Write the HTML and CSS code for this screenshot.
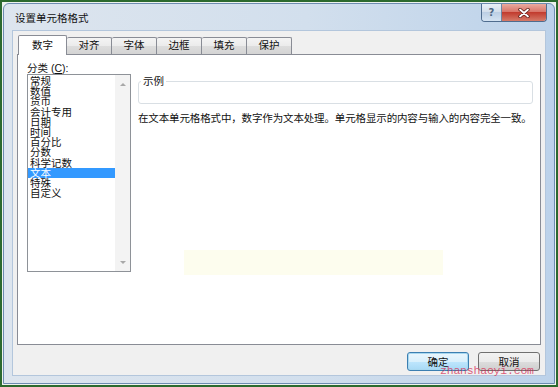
FILE: index.html
```html
<!DOCTYPE html>
<html lang="zh-CN">
<head>
    <meta charset="UTF-8">
    <title>设置单元格格式</title>
    <link rel="stylesheet" href="styles.css">
</head>
<body>
    <div class="shot">
        <div class="window">
            <div class="titlebar">
                <span class="title">设置单元格格式</span>
                <div class="caption-btns">
                    <button class="cap-help">?</button>
                    <button class="cap-close">
                        <svg class="close-icon" viewBox="0 0 12 10">
                            <path d="M2 1.5 L10 8.5 M10 1.5 L2 8.5" stroke="#5a1a14" stroke-width="3.4" stroke-linecap="round"></path>
                            <path d="M2 1.5 L10 8.5 M10 1.5 L2 8.5" stroke="#ffffff" stroke-width="1.8" stroke-linecap="round"></path>
                        </svg>
                    </button>
                </div>
            </div>

            <div class="client">
                <div class="tabs">
                    <div class="tab active">数字</div>
                    <div class="tab">对齐</div>
                    <div class="tab">字体</div>
                    <div class="tab">边框</div>
                    <div class="tab">填充</div>
                    <div class="tab">保护</div>
                </div>

                <div class="panel">
                    <div class="cat-col">
                        <div class="cat-label">分类 (<u>C</u>):</div>
                        <div class="listbox">
                            <ul class="items">
                                <li>常规</li>
                                <li>数值</li>
                                <li>货币</li>
                                <li>会计专用</li>
                                <li>日期</li>
                                <li>时间</li>
                                <li>百分比</li>
                                <li>分数</li>
                                <li>科学记数</li>
                                <li class="selected">文本</li>
                                <li>特殊</li>
                                <li>自定义</li>
                            </ul>
                            <div class="vscroll">
                                <span class="arrow up"></span>
                                <span class="arrow down"></span>
                            </div>
                        </div>
                    </div>

                    <div class="detail">
                        <fieldset class="sample">
                            <legend>示例</legend>
                        </fieldset>
                        <p class="desc">在文本单元格格式中，数字作为文本处理。单元格显示的内容与输入的内容完全一致。</p>
                    </div>

                    <div class="ghost"></div>
                </div>

                <div class="actions">
                    <button class="btn default">确定</button>
                    <button class="btn">取消</button>
                </div>
            </div>
        </div>
        <div class="watermark">zhanshaoyi.com</div>
    </div>
</body>
</html>
```

FILE: styles.css
```css
:root {
    --text: #111111;
    --tab-border: #898c95;
    --client-bg: #f0f0f0;
    --highlight: #3399ff;
}

* {
    margin: 0;
    padding: 0;
    box-sizing: border-box;
}

body {
    font-family: "Liberation Sans", "Noto Sans CJK SC", sans-serif;
    font-size: 10.5px;
    color: var(--text);
    background: #ffffff;
}

.shot {
    position: relative;
    width: 558px;
    height: 387px;
    border: 2px solid #2c6a2e;
    padding: 1px;
    background: #eef3ee;
}

.window {
    height: 100%;
    display: flex;
    flex-direction: column;
    border: 1px solid #6d8cb1;
    border-radius: 6px 6px 0 0;
    background: linear-gradient(90deg, #dde5ee 0%, #d2dfed 55%, #bcd2ea 100%);
    padding: 0 8px 7px 8px;
}

.titlebar {
    height: 26px;
    display: flex;
    justify-content: space-between;
}

.title {
    padding: 8px 0 0 3px;
    line-height: 12px;
}

.caption-btns {
    display: flex;
    height: 18px;
    margin-right: -1px;
    border: 1px solid #4f6c8e;
    border-top: none;
    border-radius: 0 0 4px 4px;
    overflow: hidden;
}

.caption-btns button {
    border: none;
    display: flex;
    align-items: center;
    justify-content: center;
    font-family: "DejaVu Sans", sans-serif;
}

.cap-help {
    width: 20px;
    background: linear-gradient(#e8eff7 0%, #d3dfec 45%, #bccfe4 50%, #d4e3f2 100%);
    border-right: 1px solid #6f86a3 !important;
    color: #4e6784;
    font-size: 10px;
    font-weight: bold;
}

.cap-close {
    width: 44px;
    background: linear-gradient(#e9aa9f 0%, #d9766a 45%, #c23c2f 50%, #d57a68 100%);
}

.close-icon {
    width: 12px;
    height: 10px;
}

.client {
    flex: 1;
    display: flex;
    flex-direction: column;
    background: var(--client-bg);
    border: 1px solid #b3c6dc;
    padding: 4px 4px 4px 4px;
}

.tabs {
    height: 19px;
    display: flex;
    align-items: flex-end;
    padding-left: 1px;
    position: relative;
    z-index: 1;
}

.tab {
    width: 45px;
    height: 17px;
    line-height: 15px;
    text-align: center;
    border: 1px solid var(--tab-border);
    border-bottom: none;
    border-left: none;
    background: linear-gradient(#f4f4f4 0%, #ebebeb 50%, #dddddd 51%, #d4d4d4 100%);
    border-radius: 2px 2px 0 0;
}

.tab.active {
    width: 49px;
    height: 20px;
    margin-bottom: -1px;
    line-height: 19px;
    border-left: 1px solid var(--tab-border);
    background: #ffffff;
}

.panel {
    flex: 1;
    position: relative;
    display: flex;
    gap: 7px;
    background: #ffffff;
    border: 1px solid var(--tab-border);
    padding: 7px 7px 0 9px;
}

.cat-col {
    flex: none;
    width: 104px;
}

.cat-label {
    line-height: 12px;
}

.listbox {
    height: 198px;
    display: flex;
    border: 1px solid #8e9298;
    background: #ffffff;
}

.items {
    flex: 1;
    list-style: none;
    padding-top: 1px;
}

.items li {
    line-height: 10.2px;
    height: 10.2px;
    padding-left: 2px;
    white-space: nowrap;
}

.items li.selected {
    background: var(--highlight);
    color: #ffffff;
}

.vscroll {
    width: 15px;
    background: #f3f3f3;
    display: flex;
    flex-direction: column;
    justify-content: space-between;
    align-items: center;
    padding: 8px 0 7px;
}

.arrow {
    width: 0;
    height: 0;
    border-left: 3px solid transparent;
    border-right: 3px solid transparent;
}

.arrow.up {
    border-bottom: 3px solid #a8a8a8;
}

.arrow.down {
    border-top: 3px solid #a8a8a8;
}

.detail {
    flex: 1;
    min-width: 0;
    padding-top: 13px;
}

.sample {
    height: 29px;
    border: 1px solid #d9dfe4;
    border-radius: 3px;
    padding: 0 2px;
}

.sample legend {
    padding: 0 2px;
    line-height: 12px;
}

.desc {
    margin-top: 8px;
    line-height: 12px;
    white-space: nowrap;
    letter-spacing: -0.14px;
}

.ghost {
    position: absolute;
    left: 166px;
    top: 195px;
    width: 259px;
    height: 25px;
    background: rgba(250, 250, 205, 0.35);
}

.actions {
    height: 19px;
    margin-top: 7px;
    display: flex;
    justify-content: flex-end;
    gap: 9px;
    padding-right: 1px;
}

.btn {
    width: 62px;
    height: 19px;
    font-family: "Liberation Sans", "Noto Sans CJK SC", sans-serif;
    font-size: 10.5px;
    color: var(--text);
    border: 1px solid #707070;
    border-radius: 3px;
    background: linear-gradient(#f2f2f2 0%, #ebebeb 50%, #dddddd 51%, #cfcfcf 100%);
}

.btn.default {
    border-color: #3c7fb1;
    box-shadow: inset 0 0 0 1px #a8d8f0;
    background: linear-gradient(#eaf6fd 0%, #d9f0fc 50%, #bee6fd 51%, #a7d9f5 100%);
}

.watermark {
    position: absolute;
    left: 438px;
    top: 362px;
    font-family: "Liberation Mono", monospace;
    font-size: 11.5px;
    color: rgba(214, 40, 80, 0.75);
    letter-spacing: -0.2px;
}
```
